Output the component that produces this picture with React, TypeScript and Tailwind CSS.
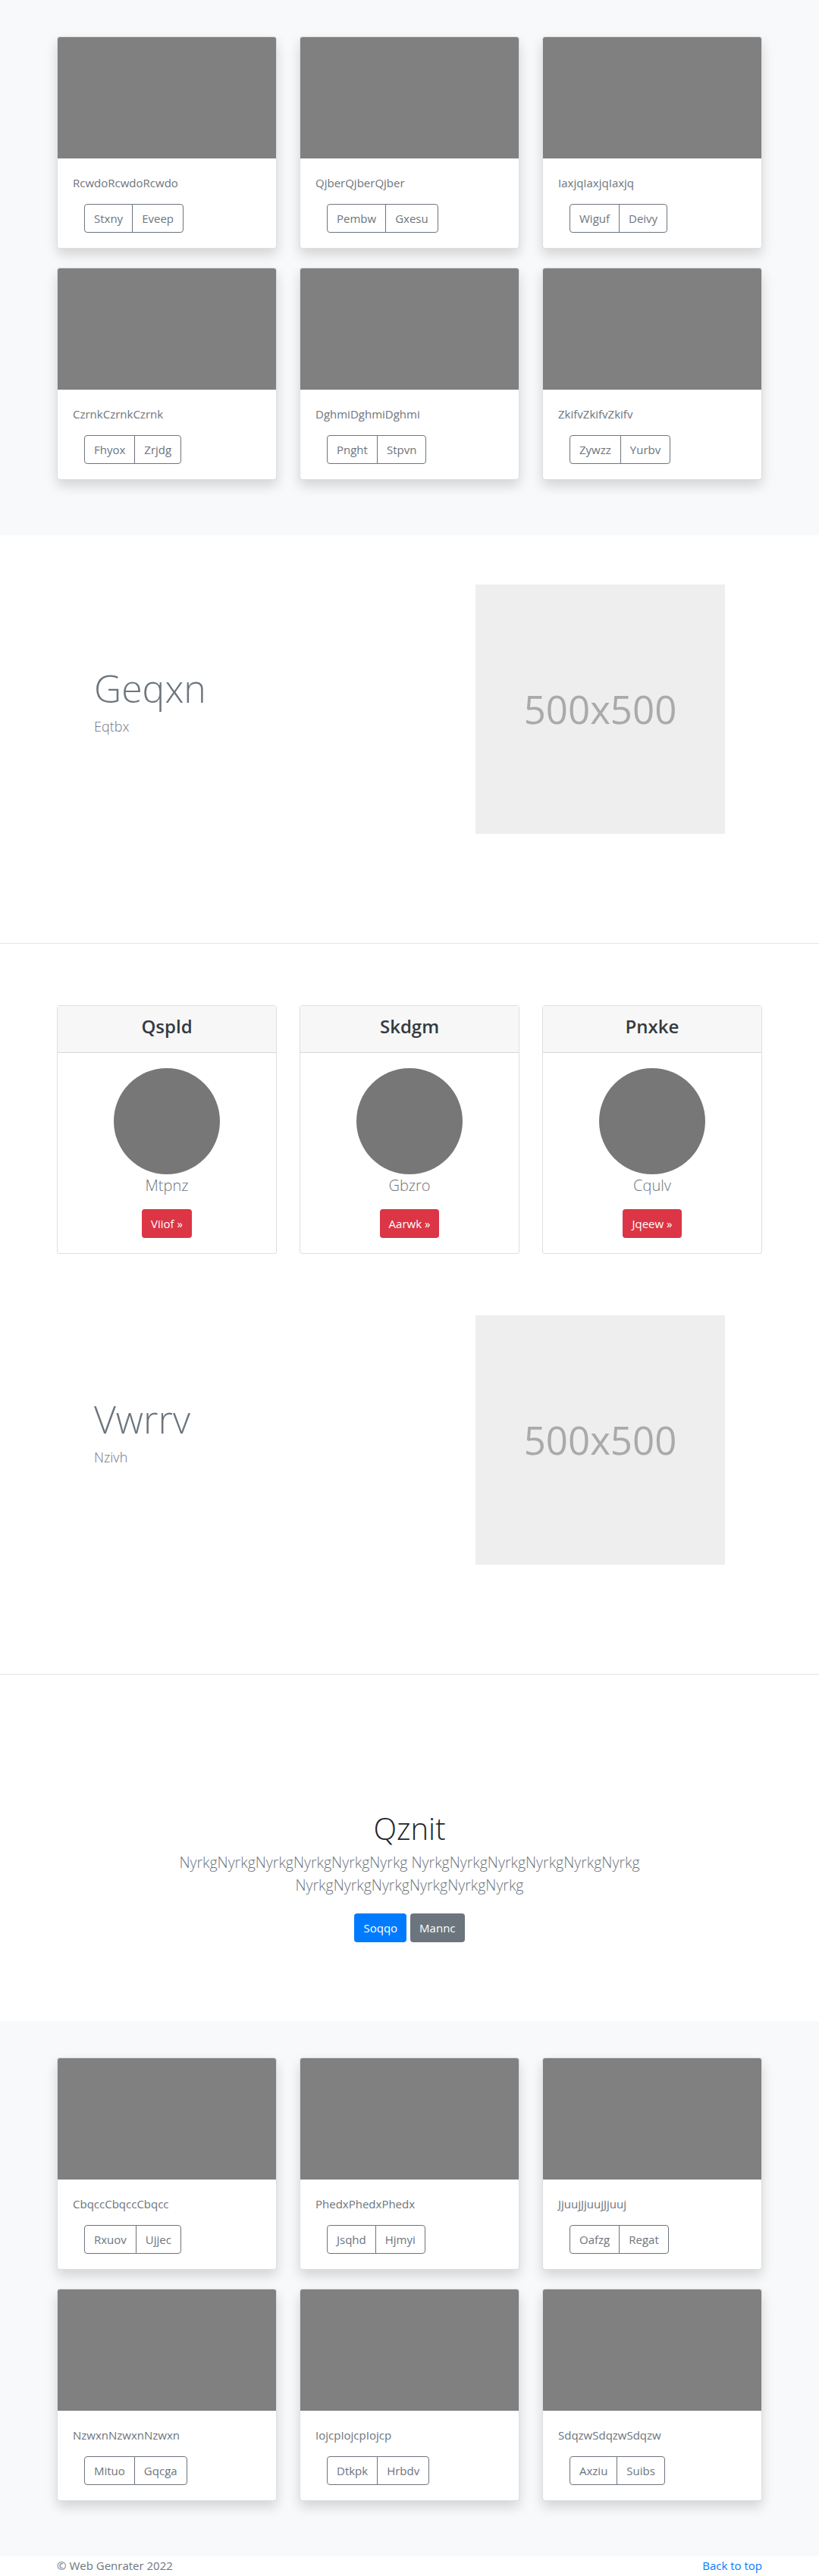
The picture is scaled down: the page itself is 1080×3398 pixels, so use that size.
import React from "react";

type tAlbumCard = {
  title: string;
  buttons: [string, string];
};

const topCards: tAlbumCard[] = [
  { title: "Rcwdo", buttons: ["Stxny", "Eveep"] },
  { title: "Qjber", buttons: ["Pembw", "Gxesu"] },
  { title: "Iaxjq", buttons: ["Wiguf", "Deivy"] },
  { title: "Czrnk", buttons: ["Fhyox", "Zrjdg"] },
  { title: "Dghmi", buttons: ["Pnght", "Stpvn"] },
  { title: "Zkifv", buttons: ["Zywzz", "Yurbv"] },
];

const bottomCards: tAlbumCard[] = [
  { title: "Cbqcc", buttons: ["Rxuov", "Ujjec"] },
  { title: "Phedx", buttons: ["Jsqhd", "Hjmyi"] },
  { title: "Jjuuj", buttons: ["Oafzg", "Regat"] },
  { title: "Nzwxn", buttons: ["Mituo", "Gqcga"] },
  { title: "Iojcp", buttons: ["Dtkpk", "Hrbdv"] },
  { title: "Sdqzw", buttons: ["Axziu", "Suibs"] },
];

const pricing = [
  { head: "Qspld", name: "Mtpnz", action: "Viiof" },
  { head: "Skdgm", name: "Gbzro", action: "Aarwk" },
  { head: "Pnxke", name: "Cqulv", action: "Jqeew" },
];

function AlbumCard({ item }: { item: tAlbumCard }) {
  return (
    <div className="bg-white rounded border border-black/[0.125] shadow-[0_8px_16px_rgba(0,0,0,0.15)] overflow-hidden">
      <div className="h-[160px] bg-[#808080]"></div>
      <div className="p-5">
        <p className="text-[15px] leading-6 mb-4 text-[#6c757d]">
          {item.title}{item.title}{item.title}
        </p>
        <div className="ml-[15px] inline-flex">
          <button className="h-[38px] px-3 text-[15px] text-[#6c757d] border border-[#6c757d] rounded-l">
            {item.buttons[0]}
          </button>
          <button className="h-[38px] px-3 -ml-px text-[15px] text-[#6c757d] border border-[#6c757d] rounded-r">
            {item.buttons[1]}
          </button>
        </div>
      </div>
    </div>
  );
}

function Album({ cards }: { cards: tAlbumCard[] }) {
  return (
    <section className="bg-[#f8f9fa] pt-12 pb-12">
      <div className="w-[960px] mx-auto px-[15px]">
        <div className="grid grid-cols-3 gap-x-[30px]">
          {cards.map((c, i) => (
            <div key={i} className="mb-[25px]">
              <AlbumCard item={c} />
            </div>
          ))}
        </div>
      </div>
    </section>
  );
}

function Feature({ title, sub }: { title: string; sub: string }) {
  return (
    <section className="bg-white pt-[65px] pb-[144px] border-b border-[#e5e5e5]">
      <div className="w-[960px] mx-auto px-[15px] flex items-start">
        <div className="flex-1 pl-[49px] pt-[107px]">
          <h1 className="text-[50px] leading-[60px] font-light text-[#6c757d] mb-2">{title}</h1>
          <p className="text-[18px] leading-6 font-light text-[#6c757d]">{sub}</p>
        </div>
        <div className="w-[329px] h-[329px] mr-[49px] bg-[#eeeeee] flex items-center justify-center">
          <span className="text-[51px] text-[#aaaaaa]">500x500</span>
        </div>
      </div>
    </section>
  );
}

export default function App() {
  const word = "NyrkgNyrkgNyrkgNyrkgNyrkgNyrkg";

  return (
    <div className="bg-white text-[#212529]" style={{ fontFamily: '"Segoe UI", "Open Sans", Roboto, sans-serif' }}>
      <Album cards={topCards} />

      <Feature title="Geqxn" sub="Eqtbx" />

      <section className="bg-white pt-[81px] pb-4">
        <div className="w-[960px] mx-auto px-[15px]">
          <div className="grid grid-cols-3 gap-x-[30px]">
            {pricing.map((p, i) => (
              <div key={i} className="border border-black/[0.125] rounded bg-white text-center">
                <div className="bg-[#f7f7f7] border-b border-black/[0.125] pt-3 pb-5">
                  <h4 className="text-[24px] leading-[29px] font-semibold text-[#343a40]">{p.head}</h4>
                </div>
                <div className="p-5">
                  <div className="w-[140px] h-[140px] rounded-full bg-[#777777] mx-auto"></div>
                  <p className="text-[20px] leading-[30px] font-light text-[#6c757d] mb-4">{p.name}</p>
                  <button className="bg-[#dc3545] text-white text-[15px] leading-6 px-3 py-[7px] rounded">
                    {p.action} &raquo;
                  </button>
                </div>
              </div>
            ))}
          </div>
        </div>
      </section>

      <Feature title="Vwrrv" sub="Nzivh" />

      <section className="bg-white pt-[179px] pb-[104px] text-center">
        <div className="w-[670px] mx-auto px-[15px]">
          <h1 className="text-[40px] leading-[48px] font-light mb-[6px]">Qznit</h1>
          <p className="text-[19.5px] leading-[30px] font-light text-[#6c757d] mb-[22px]">
            {word} {word} {word}
          </p>
          <div className="flex justify-center gap-[5px]">
            <button className="bg-[#007bff] text-white text-[15px] leading-6 px-3 py-[7px] rounded">Soqqo</button>
            <button className="bg-[#6c757d] text-white text-[15px] leading-6 px-3 py-[7px] rounded">Mannc</button>
          </div>
        </div>
      </section>

      <Album cards={bottomCards} />

      <footer className="bg-white">
        <div className="w-[960px] mx-auto px-[15px] flex justify-between text-[15px] leading-6">
          <p className="text-[#6c757d]">&copy; Web Genrater 2022</p>
          <a href="#" className="text-[#007bff]">Back to top</a>
        </div>
      </footer>
    </div>
  );
}
